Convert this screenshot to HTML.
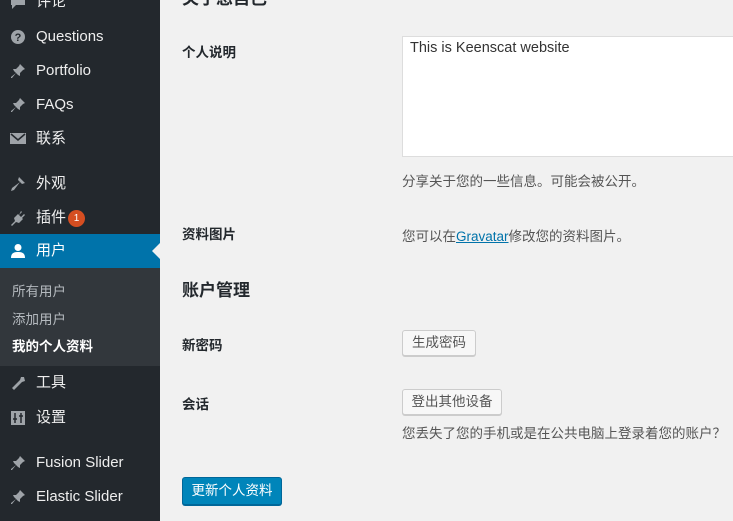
<!DOCTYPE html>
<html><head><meta charset="utf-8"><style>
*{margin:0;padding:0;box-sizing:border-box}
body{width:733px;height:521px;overflow:hidden;background:#f1f1f1;font-family:"Liberation Sans","Noto Sans CJK SC",sans-serif;position:relative;font-size:13px;color:#23282d}
#side{position:absolute;left:0;top:0;width:160px;height:521px;background:#23282d}
.it{position:absolute;left:0;width:160px;height:34px;color:#eee;font-size:15px;line-height:34px;padding-left:36px}
.ic{position:absolute;left:10px;top:9px;width:16px;height:16px}
.ab{position:absolute;left:0;top:234px;width:160px;height:34px;background:#0073aa}
.ab:after{content:"";position:absolute;right:0;top:9px;border:8px solid transparent;border-right-color:#f1f1f1}
.sub{position:absolute;left:0;top:268px;width:160px;height:98px;background:#32373c}
.si{position:absolute;left:12px;font-size:13.5px;color:#b4b9be}
.lab{position:absolute;left:182px;font-weight:bold;font-size:13.5px;color:#23282d}
.desc{position:absolute;left:402px;font-size:13.5px;color:#555}
.btn{position:absolute;left:402px;height:26px;border:1px solid #ccc;background:#f7f7f7;border-radius:3px;font-size:13.5px;color:#555;line-height:24px;text-align:center;box-shadow:0 1px 0 #ccc}
</style></head><body>
<div id="side">
<div class="it" style="top:-15px">评论<svg class="ic" viewBox="0 0 16 16"><path d="M1 2h14v9H6l-4 4v-4H1z" fill="#9ea3a8"/></svg></div>
<div class="it" style="top:20px">Questions<svg class="ic" viewBox="0 0 16 16"><circle cx="8" cy="8" r="7" fill="#9ea3a8"/><text x="8" y="12" font-size="11" font-weight="bold" text-anchor="middle" fill="#23282d" font-family="Liberation Sans">?</text></svg></div>
<div class="it" style="top:54px">Portfolio<svg class="ic" viewBox="0 0 16 16"><path d="M10 1l5 5-2 1-3 3 0 3-2-1-2-2-4 5-1 0 0-1 5-4-2-2-1-2 3 0 3-3z" fill="#9ea3a8"/></svg></div>
<div class="it" style="top:88px">FAQs<svg class="ic" viewBox="0 0 16 16"><path d="M10 1l5 5-2 1-3 3 0 3-2-1-2-2-4 5-1 0 0-1 5-4-2-2-1-2 3 0 3-3z" fill="#9ea3a8"/></svg></div>
<div class="it" style="top:122px">联系<svg class="ic" viewBox="0 0 16 16"><rect x="0" y="2" width="16" height="11" fill="#9ea3a8"/><path d="M1 3l7 6 7-6" stroke="#23282d" stroke-width="1.6" fill="none"/></svg></div>
<div class="it" style="top:167px">外观<svg class="ic" viewBox="0 0 16 16"><path d="M9 1l6 6-3 1-2-2-6 8-3 1 1-3 8-6-2-2z" fill="#9ea3a8"/></svg></div>
<div class="it" style="top:201px">插件<span style="display:inline-block;width:17px;height:17px;border-radius:9px;background:#d54e21;color:#fff;font-size:10px;line-height:17px;text-align:center;vertical-align:1px;margin-left:2px">1</span><svg class="ic" viewBox="0 0 16 16"><path d="M11 1l1 1-3 3 2 2 3-3 1 1-3 3 1 1-4 4-3-1-4 4-1-1 4-4-1-3 4-4 1 1z" fill="#9ea3a8"/></svg></div>
<div class="ab"></div>
<div class="it" style="top:234px;color:#fff">用户<svg class="ic" viewBox="0 0 16 16"><circle cx="8" cy="4.5" r="3.5" fill="#fff"/><path d="M1 15c0-5 3-6 7-6s7 1 7 6z" fill="#fff"/></svg></div>
<div class="sub">
<div class="si" style="top:12px">所有用户</div>
<div class="si" style="top:40px">添加用户</div>
<div class="si" style="top:67px;color:#fff;font-weight:bold">我的个人资料</div>
</div>
<div class="it" style="top:366px">工具<svg class="ic" viewBox="0 0 16 16"><path d="M14 2l-3 0-1 3 -8 8 2 2 8-8 3-1z" fill="#9ea3a8"/></svg></div>
<div class="it" style="top:401px">设置<svg class="ic" viewBox="0 0 16 16"><rect x="1" y="1" width="14" height="14" fill="#9ea3a8"/><path d="M5 3v10M11 3v10M3 9h4M9 6h4" stroke="#23282d" stroke-width="1.5"/></svg></div>
<div class="it" style="top:446px">Fusion Slider<svg class="ic" viewBox="0 0 16 16"><path d="M10 1l5 5-2 1-3 3 0 3-2-1-2-2-4 5-1 0 0-1 5-4-2-2-1-2 3 0 3-3z" fill="#9ea3a8"/></svg></div>
<div class="it" style="top:480px">Elastic Slider<svg class="ic" viewBox="0 0 16 16"><path d="M10 1l5 5-2 1-3 3 0 3-2-1-2-2-4 5-1 0 0-1 5-4-2-2-1-2 3 0 3-3z" fill="#9ea3a8"/></svg></div>
</div>
<div style="position:absolute;left:182px;top:-16px;font-size:17px;font-weight:bold">关于您自己</div>
<div class="lab" style="top:41px">个人说明</div>
<div style="position:absolute;left:402px;top:36px;width:340px;height:121px;background:#fff;border:1px solid #ddd;padding:3px 7px;font-size:14.5px;color:#333">This is Keenscat website</div>
<div class="desc" style="top:170px">分享关于您的一些信息。可能会被公开。</div>
<div class="lab" style="top:223px">资料图片</div>
<div class="desc" style="top:225px">您可以在<span style="color:#0073aa;text-decoration:underline">Gravatar</span>修改您的资料图片。</div>
<div style="position:absolute;left:182px;top:276px;font-size:17px;font-weight:bold">账户管理</div>
<div class="lab" style="top:334px">新密码</div>
<div class="btn" style="top:330px;width:74px">生成密码</div>
<div class="lab" style="top:393px">会话</div>
<div class="btn" style="top:389px;width:100px">登出其他设备</div>
<div class="desc" style="top:422px;white-space:nowrap">您丢失了您的手机或是在公共电脑上登录着您的账户？</div>
<div style="position:absolute;left:182px;top:477px;width:100px;height:28px;background:#0085ba;border:1px solid #006799;border-radius:3px;color:#fff;font-size:13.5px;line-height:26px;text-align:center;box-shadow:0 1px 0 #006799">更新个人资料</div>
</body></html>
